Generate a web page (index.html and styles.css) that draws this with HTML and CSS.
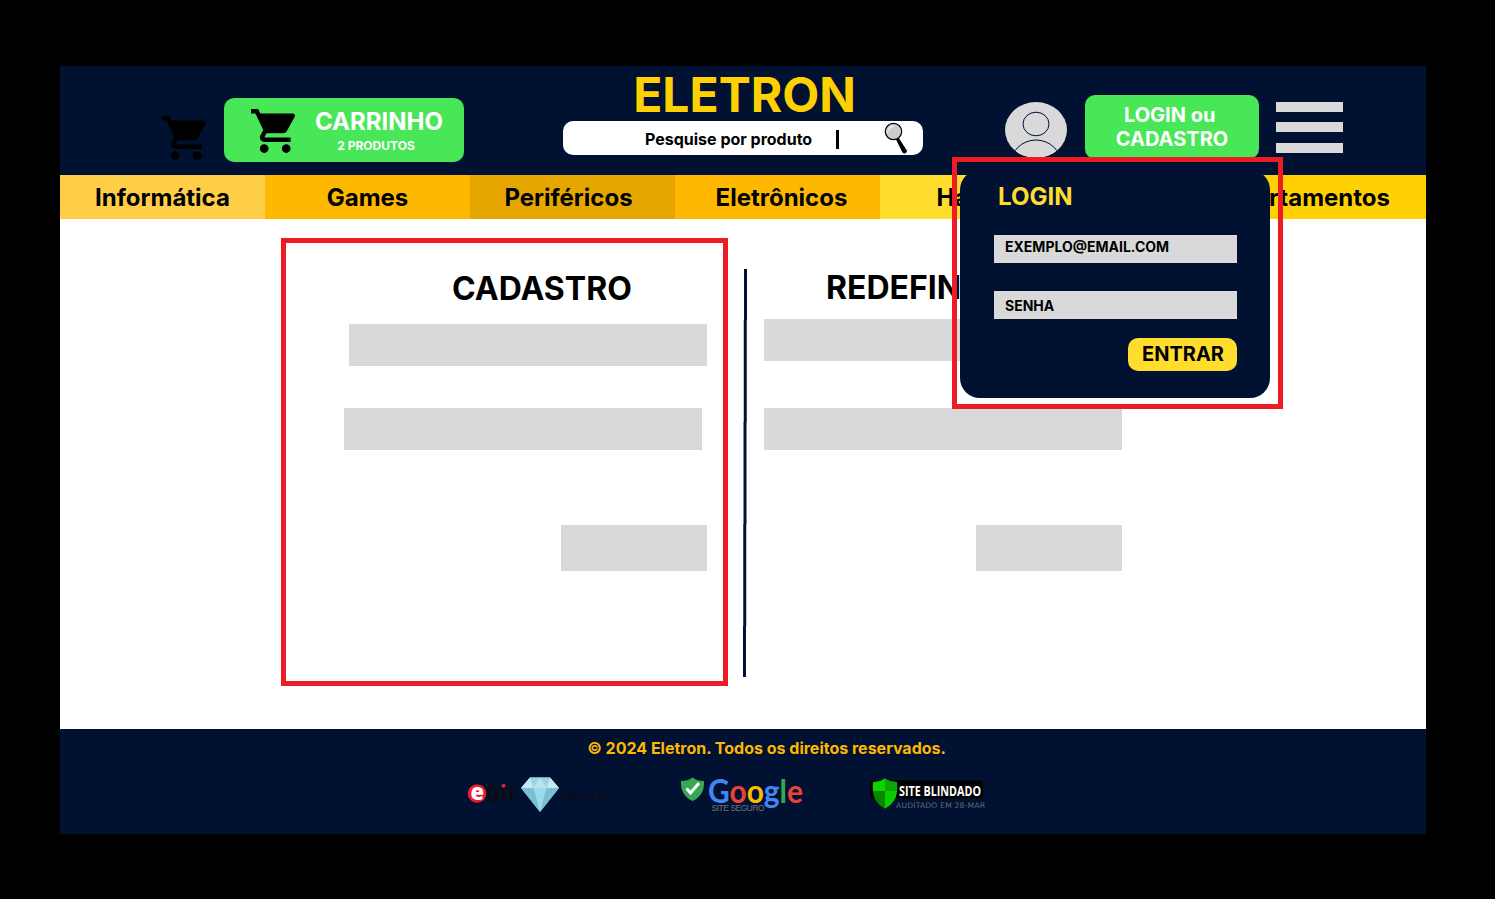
FILE: index.html
```html
<!DOCTYPE html>
<html lang="pt-BR">
<head>
<meta charset="utf-8">
<title>Eletron</title>
<link rel="stylesheet" href="styles.css">
</head>
<body>
<svg class="defs" width="0" height="0" aria-hidden="true">
  <symbol id="cart" viewBox="1 2 20 20"><path d="M7 18c-1.1 0-1.99.9-1.99 2S5.900 22 7 22s2-.9 2-2-.9-2-2-2zM1 2v2h2l3.600 7.590-1.350 2.450c-.16.28-.25.61-.25.96 0 1.100.9 2 2 2h12v-2H7.420c-.14 0-.25-.11-.25-.25l.03-.12.9-1.630h7.450c.75 0 1.410-.41 1.750-1.030l3.580-6.490c.08-.14.12-.31.12-.48 0-.55-.45-1-1-1H5.210l-.94-2H1zm16 16c-1.100 0-1.990.9-1.990 2s.89 2 1.990 2 2-.9 2-2-.9-2-2-2z"/></symbol>
</svg>
<div class="page">
  <header class="header">
    <svg class="cart-plain"><use href="#cart"/></svg>
    <a class="cart-button">
      <svg class="cart-icon"><use href="#cart"/></svg>
      <span class="cart-text"><strong>CARRINHO</strong><small>2 PRODUTOS</small></span>
    </a>
    <div class="brand">
      <h1>ELETRON</h1>
      <div class="search">
        <span class="search-label">Pesquise por produto</span>
        <span class="caret"></span>
        <svg class="lens" width="24" height="32" viewBox="0 0 24 32">
          <path d="M12.500 17.500l2-1.200 8 12.400-.5 1.800-2.200.7-1-1z" fill="#000" stroke="#000"/>
          <circle cx="9.500" cy="9.500" r="8.200" fill="#ccc" stroke="#000" stroke-width="1.200"/>
          <path d="M3.500 11A6.500 6.500 0 0 1 11.500 3.500Q5.500 6 3.500 11z" fill="#eee"/>
        </svg>
      </div>
    </div>
    <svg class="avatar" width="62" height="56" viewBox="0 0 62 56">
      <clipPath id="face"><ellipse cx="31" cy="28" rx="31" ry="28"/></clipPath>
      <g clip-path="url(#face)" fill="#d9d9d9" stroke="#001131">
        <path d="M0 0h62v56H0z" stroke="none"/>
        <ellipse cx="31" cy="22" rx="13" ry="11.800"/>
        <ellipse cx="31" cy="64" rx="26" ry="26"/>
      </g>
    </svg>
    <a class="login-button">LOGIN ou&nbsp;<br>CADASTRO</a>
    <div class="menu"><i></i><i></i><i></i></div>
  </header>
  <nav class="nav">
    <a class="c1">Informática</a><a class="c2">Games</a><a class="c3">Periféricos</a><a class="c2 c4">Eletrônicos</a><a class="c5">Hardware</a><a class="c6">Departamentos</a>
  </nav>
  <main class="main">
    <section class="signup">
      <h2>CADASTRO</h2>
      <div class="field first"></div>
      <div class="field second"></div>
      <div class="submit"></div>
    </section>
    <svg class="divider" width="5" height="408" viewBox="0 0 5 408"><path d="M1 0h3v51h-3zM.75 51h3v102h-3zM.5 153h3v102h-3zM.25 255h3v102h-3zM0 357h3v51h-3z" fill="#001131"/></svg>
    <section class="reset">
      <h2>REDEFINIR</h2>
      <div class="field"></div>
      <div class="field second"></div>
      <div class="submit"></div>
    </section>
  </main>
  <footer class="footer">
    <p>© 2024 Eletron. Todos os direitos reservados.</p>
    <div class="seals">
      <svg class="ebit" width="154" height="40" viewBox="0 0 154 40">
        <circle cx="10" cy="19.500" r="9.300" fill="#ec1c2a"/>
        <text x="3.500" y="25.500" class="ebit-e">e</text>
        <text x="19" y="28" class="ebit-bit" textLength="31" lengthAdjust="spacingAndGlyphs">bıt</text>
        <circle cx="36.500" cy="11.700" r="2" fill="#ec1c2a"/>
        <path d="M63 3.500h20L92 14 73 38 54 14z" fill="#9edbea"/>
        <path d="M63 3.500L54 14h12.500zM83 3.500L92 14H79.500z" fill="#c6e9f0"/>
        <path d="M63 3.500h10L66.500 14zM73 3.500h10L79.500 14z" fill="#9bd5e3"/>
        <path d="M73 3.500L66.500 14h13z" fill="#b9e4ee"/>
        <path d="M54 14h12.500L73 38zM92 14H79.500L73 38z" fill="#79c0d5"/>
        <text x="94" y="25" class="excelente" textLength="56">EXCELENTE</text>
      </svg>
      <svg class="google" width="124" height="40" viewBox="0 0 124 40">
        <path d="M1 7Q8 7 12.500 3.500Q17 7 24 7Q25 21 12.500 27Q0 21 1 7z" fill="#34a853"/>
        <path d="M6.500 14.500l4 4.500 8.500-10" fill="none" stroke="#fff" stroke-width="3"/>
        <text x="28" y="28.500" class="google-word" textLength="95" lengthAdjust="spacingAndGlyphs"><tspan fill="#4285f4">G</tspan><tspan fill="#ea4335">o</tspan><tspan fill="#fbbc05">o</tspan><tspan fill="#4285f4">g</tspan><tspan fill="#34a853">l</tspan><tspan fill="#ea4335">e</tspan></text>
        <text x="31.500" y="36.500" class="seguro" textLength="53">SITE SEGURO</text>
      </svg>
      <svg class="blindado" width="116" height="40" viewBox="0 0 116 40">
        <rect x="1" y="6.500" width="113" height="18" rx="4" fill="#000"/>
        <path d="M4 8Q11 8 16 4.500Q21 8 28 8Q30 27 16 34.500Q2 27 4 8z" fill="#08a800"/>
        <path d="M16 4.500Q21 8 28 8l.1 9H16z" fill="#0fa505"/>
        <path d="M4 8Q11 8 16 4.500V17H4z" fill="#10d000"/>
        <path d="M16 17h12Q27 29 16 34.500z" fill="#09cc00"/>
        <path d="M4 17h12v17.500Q5 29 4 17z" fill="#078800"/>
        <text x="30" y="21.500" class="blindado-word" textLength="82" lengthAdjust="spacingAndGlyphs">SITE BLINDADO</text>
        <text x="27" y="33.500" class="audit" textLength="89">AUDITADO EM 28-MAR</text>
      </svg>
    </div>
  </footer>
  <div class="popup">
    <div class="login-panel">
      <h3>LOGIN</h3>
      <div class="input email">EXEMPLO@EMAIL.COM</div>
      <div class="input">SENHA</div>
      <a class="enter">ENTRAR</a>
    </div>
  </div>
</div>
</body>
</html>
```
FILE: styles.css
```css
* { box-sizing: border-box; }
body { margin: 0; background: #000; font-family: Inter, "Liberation Sans", sans-serif; font-weight: 700; color: #000; }
h1, h2, h3, p { margin: 0; font-weight: 700; white-space: nowrap; }
svg { display: block; flex: none; }
.defs { position: absolute; }
.page { position: relative; width: 1366px; height: 768px; margin: 66px 0 0 60px; background: #fff; overflow: hidden; }

.header { display: flex; align-items: flex-start; height: 109px; padding-left: 102px; background: #001131; }
.cart-plain { width: 44px; height: 44px; margin-top: 50px; }
.cart-button { display: flex; width: 240px; height: 64px; margin: 32px 0 0 18px; padding: 11px 0 0 27px; background: #48e757; border-radius: 10px; color: #fff; }
.cart-icon { width: 44px; height: 44px; }
.cart-text { display: flex; flex-direction: column; align-items: center; width: 128px; margin-left: 20px; margin-top: -2px; }
.cart-text strong { font-size: 24px; font-weight: 700; line-height: 29px; }
.cart-text small { font-size: 12px; line-height: 15px; margin: 2px 6px 0 0; }
.brand { width: 360px; margin-left: 99px; }
.brand h1 { height: 55px; padding-left: 3px; font-size: 48px; line-height: 58px; text-align: center; color: #ffd103; }
.search { display: flex; height: 34px; padding-left: 82px; background: #fff; border-radius: 10px; }
.search-label { width: 168px; font-size: 16px; line-height: 36px; white-space: nowrap; }
.caret { width: 3px; height: 19px; margin: 9px 0 0 23px; background: #000; }
.lens { margin: 1px 0 0 45px; }
.avatar { margin: 36px 0 0 82px; }
.login-button { width: 174px; height: 64px; margin: 29px 0 0 18px; padding-top: 8px; border-radius: 10px; background: #48e757; color: #fff; font-size: 20px; line-height: 24px; text-align: center; }
.menu { width: 67px; margin: 36px 0 0 17px; }
.menu i { display: block; height: 10px; margin-bottom: 10px; background: #d9d9d9; }
.menu i:nth-child(2) { margin-bottom: 11px; }

.nav { display: grid; grid-template-columns: repeat(5, 205px) 1fr; grid-template-rows: 44px; height: 44px; font-size: 24px; line-height: 45px; text-align: center; }
.c1 { background: #ffce47; }
.c2 { background: #ffb800; }
.c3 { background: #e5a600; padding-right: 8px; }
.c4 { padding-left: 8px; }
.c5 { background: #ffdd2d; padding-left: 22px; }
.c6 { background: #ffd103; text-align: right; padding-right: 36px; }

.main { display: flex; align-items: flex-start; height: 510px; }
.main h2 { font-size: 32px; line-height: 39px; }
.signup { width: 447px; height: 448px; margin: 19px 0 0 221px; padding: 26px 0 0 58px; border: 5px solid #ed1c24; }
.signup h2 { margin-left: 108px; }
.field { width: 358px; height: 42px; background: #d9d9d9; }
.submit { width: 146px; height: 46px; margin: 75px 0 0 212px; background: #d9d9d9; }
.signup .first { margin: 16px 0 0 5px; }
.signup .second { margin-top: 42px; }
.signup .submit { margin-left: 217px; }
.divider { margin: 50px 0 0 15px; }
.reset { margin: 49px 0 0 16px; }
.reset h2 { width: 358px; padding-left: 62px; margin-bottom: 12px; }
.reset .second { margin-top: 47px; }

.footer { height: 105px; padding-top: 9px; background: #001131; }
.footer p { padding-left: 47px; font-size: 16px; line-height: 20px; text-align: center; color: #ffb800; }
.seals { display: flex; padding-left: 407px; margin-top: 16px; }
.seals svg { overflow: visible; }
.google { margin-left: 59px; }
.blindado { margin-left: 65px; }
.ebit-e { font: 800 22px "Open Sans", sans-serif; fill: #fff; }
.ebit-bit { font: 700 25px "Noto Sans", sans-serif; fill: #0b0d12; }
.excelente { font: 600 9.500px Lato, sans-serif; fill: #0b0d12; }
.google-word { font: 700 32px Lato, sans-serif; }
.seguro { font: 500 8.300px "Liberation Sans", sans-serif; fill: #77777b; }
.blindado-word { font: 700 15px "Open Sans", sans-serif; fill: #fff; }
.audit { font: 400 7.600px "DejaVu Sans", sans-serif; fill: #66696d; }

.popup { position: absolute; left: 892px; top: 91px; width: 331px; height: 252px; padding: 8px 0 0 3px; border: 5px solid #ed1c24; }
.login-panel { display: flex; flex-direction: column; width: 310px; height: 228px; padding: 12px 33px 0 34px; border-radius: 20px; background: #001131; }
.login-panel h3 { margin: 0 0 24px 4px; font-size: 24px; line-height: 29px; color: #ffdd2d; }
.input { height: 28px; padding-left: 11px; background: #d9d9d9; font-size: 14px; line-height: 30px; }
.email { margin-bottom: 28px; line-height: 24px; }
.enter { align-self: flex-end; width: 109px; height: 33px; margin-top: 19px; padding-left: 1px; border-radius: 10px; background: #ffdd2d; font-size: 20px; line-height: 32px; text-align: center; }
```
